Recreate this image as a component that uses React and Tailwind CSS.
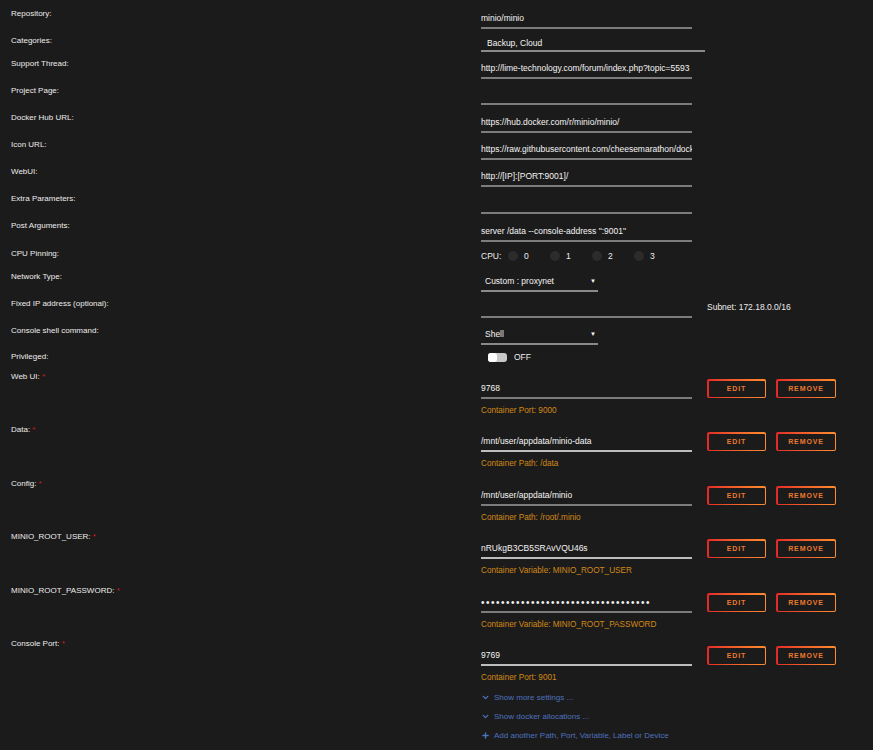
import React from 'react';
import { ChevronDown, Plus } from 'lucide-react';

// Plain form row: label column on the left, field on the right
const Row = ({ label, h, children }) => (
  <div className={`flex ${h}`}>
    <div className="w-[470px] shrink-0 leading-[14px] text-[#ececec]">{label}</div>
    <div className="flex-1">{children}</div>
  </div>
);

const Field = ({ value, mt = 'mt-[4px]', line = 'border-[#7c7c7c]' }) => (
  <div className={`w-[211px] h-[18px] border-b-2 ${line} leading-[14px] text-[8.5px] text-[#f4f4f4] whitespace-nowrap overflow-hidden ${mt}`}>
    {value}
  </div>
);

const Select = ({ value, mt }) => (
  <div className={`w-[117px] h-[18px] border-b-2 border-[#8a8a8a] leading-[14px] pl-[4px] pr-[2px] flex justify-between text-[8.5px] text-[#f4f4f4] ${mt}`}>
    <span>{value}</span>
    <span className="text-[6px]">▼</span>
  </div>
);

const GradientButton = ({ children, w }) => (
  <div className={`p-[1.5px] rounded-[2px] bg-gradient-to-r from-[#e22828] to-[#ff8c2f] ${w} h-[19px]`}>
    <div className="w-full h-full rounded-[1px] bg-[#1c1b1b] flex items-center justify-center pt-[1px]">
      <span className="text-[7px] leading-[8px] font-bold tracking-[0.9px] text-[#ea7a2e]">{children}</span>
    </div>
  </div>
);

const PortBlock = ({ label, value, note, h, line = 'border-[#7c7c7c]', secret = false }) => (
  <div className={`flex ${h}`}>
    <div className="w-[470px] shrink-0 leading-[14px] text-[#ececec]">
      {label} <span className="text-[#d01c1c]">*</span>
    </div>
    <div className="flex-1">
      <div className="flex">
        <div
          className={`w-[211px] h-[18px] mt-[11px] border-b-2 ${line} pt-[1px] leading-[13px] text-[#f4f4f4] whitespace-nowrap overflow-hidden ${
            secret ? 'text-[10px] tracking-[1.5px]' : 'text-[8.5px]'
          }`}
        >
          {value}
        </div>
        <div className="flex gap-[10px] ml-[15px] mt-[9px]">
          <GradientButton w="w-[59px]">EDIT</GradientButton>
          <GradientButton w="w-[60px]">REMOVE</GradientButton>
        </div>
      </div>
      <div className="mt-[6px] leading-[12px] text-[8.2px] text-[#d08916]">{note}</div>
    </div>
  </div>
);

const cpus = ['0', '1', '2', '3'];

export default function App() {
  return (
    <div
      className="min-h-screen bg-[#1c1b1b] pt-[7px] pl-[11px] text-[8px]"
      style={{ fontFamily: '"Liberation Sans", Arial, sans-serif' }}
    >
      <Row label="Repository:" h="h-[27px]">
        <Field value="minio/minio" mt="mt-[4px]" />
      </Row>
      <Row label="Categories:" h="h-[23px]">
        <div className="w-[224px] h-[16px] mt-[2px] border-b-2 border-[#8a8a8a] pl-[6px] leading-[14px] text-[8.5px] text-[#f4f4f4]">
          Backup, Cloud
        </div>
      </Row>
      <Row label="Support Thread:" h="h-[27px]">
        <Field value="http://lime-technology.com/forum/index.php?topic=5593" />
      </Row>
      <Row label="Project Page:" h="h-[27px]">
        <Field value="" mt="mt-[3px]" />
      </Row>
      <Row label="Docker Hub URL:" h="h-[27px]">
        <Field value="https://hub.docker.com/r/minio/minio/" />
      </Row>
      <Row label="Icon URL:" h="h-[27px]">
        <Field value="https://raw.githubusercontent.com/cheesemarathon/docker-templates/master/images/minio.png" />
      </Row>
      <Row label="WebUI:" h="h-[27px]">
        <Field value="http://[IP]:[PORT:9001]/" />
      </Row>
      <Row label="Extra Parameters:" h="h-[27px]">
        <Field value="" />
      </Row>
      <Row label="Post Arguments:" h="h-[28px]">
        <Field value={'server /data --console-address ":9001"'} mt="mt-[5px]" />
      </Row>
      <Row label="CPU Pinning:" h="h-[23px]">
        <div className="flex items-center mt-[2px] h-[14px] text-[8.5px] text-[#ececec]">
          <span className="w-[27px]">CPU:</span>
          {cpus.map((c) => (
            <div key={c} className="w-[42px] flex items-center">
              <span className="w-[10px] h-[10px] rounded-full bg-[#2c2c2c]" />
              <span className="ml-[6px]">{c}</span>
            </div>
          ))}
        </div>
      </Row>
      <Row label="Network Type:" h="h-[27px]">
        <Select value="Custom : proxynet" mt="mt-[4px]" />
      </Row>
      <Row label="Fixed IP address (optional):" h="h-[27px]">
        <div className="flex">
          <Field value="" mt="mt-[3px]" />
          <div className="ml-[15px] mt-[3px] leading-[14px] text-[8.5px] text-[#ececec]">Subnet: 172.18.0.0/16</div>
        </div>
      </Row>
      <Row label="Console shell command:" h="h-[26px]">
        <Select value="Shell" mt="mt-[3px]" />
      </Row>
      <Row label="Privileged:" h="h-[20px]">
        <div className="flex items-center h-[14px] pl-[7px]">
          <div className="w-[19px] h-[9px] rounded-[3px] bg-[#c8c8c8] flex">
            <div className="w-[9px] h-[9px] rounded-[3px] bg-white" />
          </div>
          <span className="ml-[7px] text-[8.5px] text-[#ececec]">OFF</span>
        </div>
      </Row>

      <PortBlock label="Web UI:" value="9768" note="Container Port: 9000" h="h-[53px]" />
      <PortBlock
        label="Data:"
        value="/mnt/user/appdata/minio-data"
        note="Container Path: /data"
        h="h-[54px]"
        line="border-[#bdbdbd]"
      />
      <PortBlock label="Config:" value="/mnt/user/appdata/minio" note="Container Path: /root/.minio" h="h-[53px]" />
      <PortBlock
        label="MINIO_ROOT_USER:"
        value="nRUkgB3CB5SRAvVQU46s"
        note="Container Variable: MINIO_ROOT_USER"
        h="h-[54px]"
        line="border-[#bdbdbd]"
      />
      <PortBlock
        label="MINIO_ROOT_PASSWORD:"
        value={'•'.repeat(34)}
        note="Container Variable: MINIO_ROOT_PASSWORD"
        h="h-[53px]"
        secret
      />
      <PortBlock
        label="Console Port:"
        value="9769"
        note="Container Port: 9001"
        h="h-[51px]"
        line="border-[#bdbdbd]"
      />

      <div className="pl-[470px] text-[#4d72bf]">
        <div className="flex items-center h-[19px]">
          <ChevronDown size={9} strokeWidth={3.5} className="mr-[4px]" />
          <span>Show more settings ...</span>
        </div>
        <div className="flex items-center h-[19px]">
          <ChevronDown size={9} strokeWidth={3.5} className="mr-[4px]" />
          <span>Show docker allocations ...</span>
        </div>
        <div className="flex items-center h-[19px]">
          <Plus size={9} strokeWidth={3.5} className="mr-[4px]" />
          <span>Add another Path, Port, Variable, Label or Device</span>
        </div>
      </div>
    </div>
  );
}
